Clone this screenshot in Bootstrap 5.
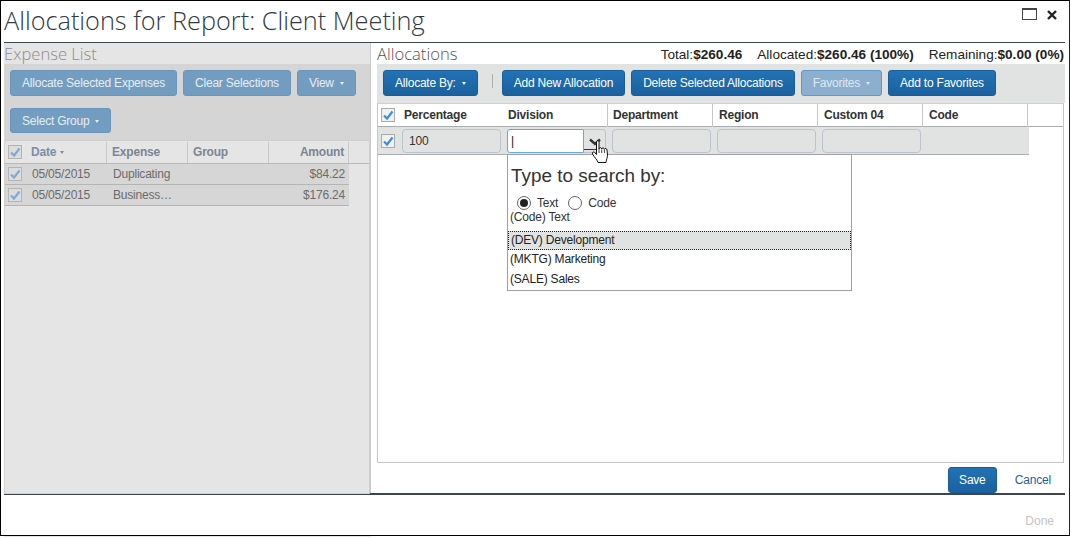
<!DOCTYPE html>
<html lang="en">
  <head>
    <meta charset="UTF-8" />
    <meta name="viewport" content="width=device-width, initial-scale=1.0" />
    <link href="https://cdn.jsdelivr.net/npm/bootstrap@5.3.3/dist/css/bootstrap.min.css" rel="stylesheet" />
    <script src="https://cdn.jsdelivr.net/npm/bootstrap@5.3.3/dist/js/bootstrap.bundle.min.js"></script>
    <title>Allocations for Report: Client Meeting</title>
    <style>
      html, body { height: 538px; overflow: hidden; background: #fff; }
      body { font-family: "Liberation Sans", Arial, sans-serif; font-size: 12px; letter-spacing: -.2px; color: #333; }
      .win { width: 1070px; height: 536px; border: 1px solid #000; border-right-color: #222; padding: 0 4px 0 3px; }
      .win-head { height: 42px; border-bottom: 1px solid #3b4650; width: 1061px; }
      .win-title { font-family: "Open Sans", sans-serif; font-weight: 300; font-size: 25.3px; letter-spacing: 0; line-height: 38px; color: #2f3a46; margin: 0; }
      .win-ctrl { gap: 10px; padding: 7px 8px 0 0; }
      .win-close { margin-top: 2px; }
      .win-body { height: 452px; width: 1061px; border-bottom: 2px solid #3b4650; }

      .pane-left { width: 367px; background: #e5e5e5; border-right: 1px solid #c9c9c9; }
      .pane-right { width: 694px; padding: 0 0 0 6px; }
      .pane-title { font-family: "Open Sans", sans-serif; font-weight: 300; font-size: 16.6px; letter-spacing: 0; line-height: 21px; height: 21px; margin: 0; color: #8d8d8d; }
      .pane-right .pane-title { color: #555; }
      .totals { font-size: 13.6px; letter-spacing: 0; gap: 15px; padding-right: 1px; color: #222; line-height: 18px; }
      .tools-left { background: #d5d5d5; height: 76px; padding: 6px 6px; gap: 12px 6px; align-content: flex-start; }
      .tools-right { background: #e1e3e3; height: 39px; padding: 6px; gap: 6px; }
      .tool-btn { font-size: 12px; letter-spacing: -.22px; line-height: 14px; padding: 5px 11px; height: 26px; border-radius: 3px; color: #fff; border: 1px solid #185d98; background: linear-gradient(#2272b5, #1a619f); white-space: nowrap; }
      .tool-btn.faded { background: #739dc0; border-color: #6b96bb; color: #e6edf3; height: 26px; }
      .tool-btn.sel-group { height: 25px; }
      .tool-btn.fav { background: #8cafd0; border-color: #5f97c6; color: #dfe8f1; }
      .caret-mini { display: inline-block; margin-left: 6px; vertical-align: middle; border: 2.500px solid transparent; border-top: 3px solid currentColor; border-bottom: 0; }
      .tool-sep { width: 1px; height: 14px; background: #a8adb0; margin: 0 3px 0 8px; }

      .grid-head { height: 24px; font-weight: 700; align-items: center; }
      .left-grid { border: 1px solid #cfcfcf; height: 354px; width: 366px; background: #e5e5e5; }
      .left-grid .grid-head { height: 23px; border-bottom: 1px solid #b9b9b9; color: #7a8692; }
      .left-grid .hcell { height: 21px; border-right: 1px solid #c9c9c9; padding-left: 5px; line-height: 21px; }
      .left-grid .c-date.hcell { color: #7b8ea6; padding-left: 4px; }
      .left-row { width: 344px; height: 21px; padding-bottom: 1px; background: #d6d6d6; border-bottom: 1px solid #b5b5b5; color: #6b6b6b; align-items: center; }
      .c-chk { width: 22px; padding-left: 3px; flex: none; display: flex; }
      .c-date { width: 80px; flex: none; }
      .c-exp { width: 81px; flex: none; }
      .c-grp { width: 81px; flex: none; }
      .c-amt { width: 80px; flex: none; text-align: right; padding-right: 4px; }
      .left-row .c-date { padding-left: 5px; }
      .left-row .c-exp { padding-left: 6px; }

      .right-grid { width: 687px; height: 360px; border: 1px solid #c6c6c6; border-top: 1px solid #d0d0d0; }
      .right-grid .grid-head { height: 23px; border-bottom: 1px solid #a9adb0; color: #333; }
      .r-chk { width: 20px; flex: none; padding-left: 3px; display: flex; }
      .r-pct { width: 105px; flex: none; padding-left: 6px; }
      .r-col { width: 105px; flex: none; padding-left: 5px; }
      .right-grid .hcell { height: 23px; line-height: 23px; }
      .r-col.hcell { border-right: 1px solid #c8c8c8; }
      .grid-head .r-col:nth-child(n+5) { padding-left: 6px; }
      .right-row { width: 651px; height: 28px; background: #e1e3e3; border-bottom: 1px solid #a9adb0; align-items: center; }
      .cell-input { height: 24px; border: 1px solid #bdc3cc; border-radius: 4px; background: #e1e3e3; line-height: 22px; padding-left: 6px; color: #333; }
      .r-pct .cell-input { width: 99px; margin-left: -1px; }
      .right-row .r-pct { padding-left: 5px; }
      .right-row .r-col { padding-left: 4px; }
      .right-row .r-col .cell-input { width: 99px; }
      .combo { width: 99px; height: 24px; display: flex; position: relative; }
      .combo-text { width: 77px; height: 24px; background: #fff; border: 1px solid #66a9e0; border-radius: 3px 0 0 3px; padding-left: 3px; line-height: 22px; color: #111; }
      .combo-btn { width: 22px; height: 24px; border: 1px solid #bdc3cc; border-left: 0; border-radius: 0 4px 4px 0; display: flex; justify-content: center; padding-top: 8px; }
      .combo-under { position: absolute; left: 77px; top: 20px; width: 13px; height: 1px; background: #333; }
      .combo-hand { position: absolute; left: 84px; top: 11px; z-index: 5; }
      .combo-pop { position: absolute; left: 0; top: 25px; width: 345px; height: 137px; background: #fff; border: 1px solid #a0a0a0; z-index: 4; color: #333; }
      .pop-title { font-size: 18.9px; letter-spacing: 0; line-height: 21px; padding: 10px 0 0 3px; color: #333; }
      .pop-radios { padding: 10px 0 0 9px; height: 24px; gap: 10px; line-height: 14px; align-items: center; }
      .radio-dot { width: 14px; height: 14px; border: 1px solid #666; border-radius: 50%; display: inline-flex; align-items: center; justify-content: center; background: #fff; }
      .radio-dot i { width: 8px; height: 8px; border-radius: 50%; background: #222; }
      .radio-item { display: flex; gap: 6px; align-items: center; }
      .pop-hint { padding-left: 2px; line-height: 14px; height: 14px; }
      .pop-list { margin-top: 7px; }
      .pop-opt { height: 19px; line-height: 18px; padding-left: 2px; color: #222; }
      .pop-opt.on { background: #e1e3e3; border: 1px dotted #222; padding-left: 2px; line-height: 17px; }
      .pop-opt.last { height: 20px; line-height: 21px; }

      .save-row { height: 31px; align-items: center; padding-top: 3px; gap: 18px; padding-right: 13px; width: 687px; }
      .save-btn { height: 26px; width: 49px; padding: 5px 0; text-align: center; }
      .cancel-link { color: #1f5fa8; text-decoration: none; }
      .win-foot { height: 39px; width: 1061px; padding: 18px 11px 0 0; text-align: right; color: #c4c4c4; line-height: 16px; letter-spacing: 0; }
      .sliver { height: 1px; width: 367px; margin-left: 4px; background: #e5e5e5; }
    </style>
  </head>
  <body>
    <svg width="0" height="0" class="d-block">
      <symbol id="chk" viewBox="0 0 14 14">
        <rect x=".5" y=".5" width="13" height="13" fill="#f1f1f1" stroke="#a9adb0" />
        <path d="M3 7.500 6 10.500 11.500 3.500" fill="none" stroke="#3f8de0" stroke-width="2.200" />
      </symbol>
      <symbol id="chk-off" viewBox="0 0 14 14">
        <rect x=".5" y=".5" width="13" height="13" fill="#dcdcdc" stroke="#b4b4b4" />
        <path d="M3 7.500 6 10.500 11.500 3.500" fill="none" stroke="#7fa9d6" stroke-width="2.200" />
      </symbol>
    </svg>

    <div class="win">
      <div class="win-head d-flex justify-content-between">
        <h1 class="win-title">Allocations for Report: Client Meeting</h1>
        <div class="win-ctrl d-flex align-items-start">
          <svg width="15" height="12" viewBox="0 0 15 12"><rect x=".5" y=".5" width="14" height="11" fill="none" stroke="#444" /><path d="M0 1.500h15" stroke="#444" /></svg>
          <svg class="win-close" width="10" height="10" viewBox="0 0 10 10"><path d="M1 1 9 9M9 1 1 9" stroke="#222" stroke-width="2.400" /></svg>
        </div>
      </div>

      <div class="win-body d-flex">
        <div class="pane-left">
          <h2 class="pane-title">Expense List</h2>
          <div class="tools-left d-flex flex-wrap">
            <button class="btn tool-btn faded">Allocate Selected Expenses</button>
            <button class="btn tool-btn faded">Clear Selections</button>
            <button class="btn tool-btn faded">View<span class="caret-mini"></span></button>
            <button class="btn tool-btn faded sel-group">Select Group<span class="caret-mini"></span></button>
          </div>
          <div class="left-grid">
            <div class="grid-head d-flex">
              <div class="c-chk"><svg width="14" height="14"><use href="#chk-off" /></svg></div>
              <div class="c-date hcell">Date<span class="caret-mini ms-1"></span></div>
              <div class="c-exp hcell">Expense</div>
              <div class="c-grp hcell">Group</div>
              <div class="c-amt hcell">Amount</div>
            </div>
            <div class="left-row d-flex">
              <div class="c-chk"><svg width="14" height="14"><use href="#chk-off" /></svg></div>
              <div class="c-date">05/05/2015</div><div class="c-exp">Duplicating</div><div class="c-grp"></div><div class="c-amt">$84.22</div>
            </div>
            <div class="left-row d-flex">
              <div class="c-chk"><svg width="14" height="14"><use href="#chk-off" /></svg></div>
              <div class="c-date">05/05/2015</div><div class="c-exp">Business…</div><div class="c-grp"></div><div class="c-amt">$176.24</div>
            </div>
          </div>
        </div>

        <div class="pane-right">
          <div class="d-flex justify-content-between align-items-end">
            <h2 class="pane-title">Allocations</h2>
            <div class="totals d-flex">
              <span>Total:<b>$260.46</b></span>
              <span>Allocated:<b>$260.46 (100%)</b></span>
              <span>Remaining:<b>$0.00 (0%)</b></span>
            </div>
          </div>
          <div class="tools-right d-flex align-items-start">
            <button class="btn tool-btn">Allocate By:<span class="caret-mini"></span></button>
            <span class="tool-sep mt-1"></span>
            <button class="btn tool-btn">Add New Allocation</button>
            <button class="btn tool-btn">Delete Selected Allocations</button>
            <button class="btn tool-btn fav">Favorites<span class="caret-mini"></span></button>
            <button class="btn tool-btn">Add to Favorites</button>
          </div>
          <div class="right-grid">
            <div class="grid-head d-flex">
              <div class="r-chk"><svg width="14" height="14"><use href="#chk" /></svg></div>
              <div class="r-pct hcell">Percentage</div>
              <div class="r-col hcell">Division</div>
              <div class="r-col hcell">Department</div>
              <div class="r-col hcell">Region</div>
              <div class="r-col hcell">Custom 04</div>
              <div class="r-col hcell">Code</div>
            </div>
            <div class="right-row d-flex">
              <div class="r-chk"><svg width="14" height="14"><use href="#chk" /></svg></div>
              <div class="r-pct"><div class="cell-input">100</div></div>
              <div class="r-col">
                <div class="combo">
                  <div class="combo-text">|</div>
                  <div class="combo-btn"><svg width="12" height="8" viewBox="0 0 12 8"><path d="M1 1.500 6 6 11 1.500" fill="none" stroke="#333" stroke-width="2.400" /></svg></div>
                  <span class="combo-under"></span>
                  <svg class="combo-hand" width="19" height="23" viewBox="0 0 19 23"><path d="M5.500 1.800c0-1.500 2.500-1.500 2.500 0V9c.3-1.800 2.500-1.800 2.700 0 .3-1.500 2.500-1.500 2.700.3.400-1.200 2.500-1 2.600.7l.5 5c0 2.500-1 4-1.500 7.500H7c-.5-2.500-3.500-5-5.500-8.500-.8-1.700 1.200-2.800 2.300-1.500L5.500 14.500z" fill="#fff" stroke="#111" stroke-width="1" /><path d="M8 9v4M10.700 9.500v3.500M13.400 9.500v3.500" stroke="#111" stroke-width=".8" /></svg>
                  <div class="combo-pop">
                    <div class="pop-title">Type to search by:</div>
                    <div class="pop-radios d-flex">
                      <span class="radio-item"><span class="radio-dot"><i></i></span>Text</span>
                      <span class="radio-item"><span class="radio-dot"></span>Code</span>
                    </div>
                    <div class="pop-hint">(Code) Text</div>
                    <div class="pop-list">
                      <div class="pop-opt on">(DEV) Development</div>
                      <div class="pop-opt">(MKTG) Marketing</div>
                      <div class="pop-opt last">(SALE) Sales</div>
                    </div>
                  </div>
                </div>
              </div>
              <div class="r-col"><div class="cell-input"></div></div>
              <div class="r-col"><div class="cell-input"></div></div>
              <div class="r-col"><div class="cell-input"></div></div>
            </div>
          </div>
          <div class="save-row d-flex justify-content-end">
            <button class="btn tool-btn save-btn">Save</button>
            <a href="#" class="cancel-link">Cancel</a>
          </div>
        </div>
      </div>

      <div class="win-foot">Done</div>
    </div>
    <div class="sliver"></div>
  </body>
</html>
